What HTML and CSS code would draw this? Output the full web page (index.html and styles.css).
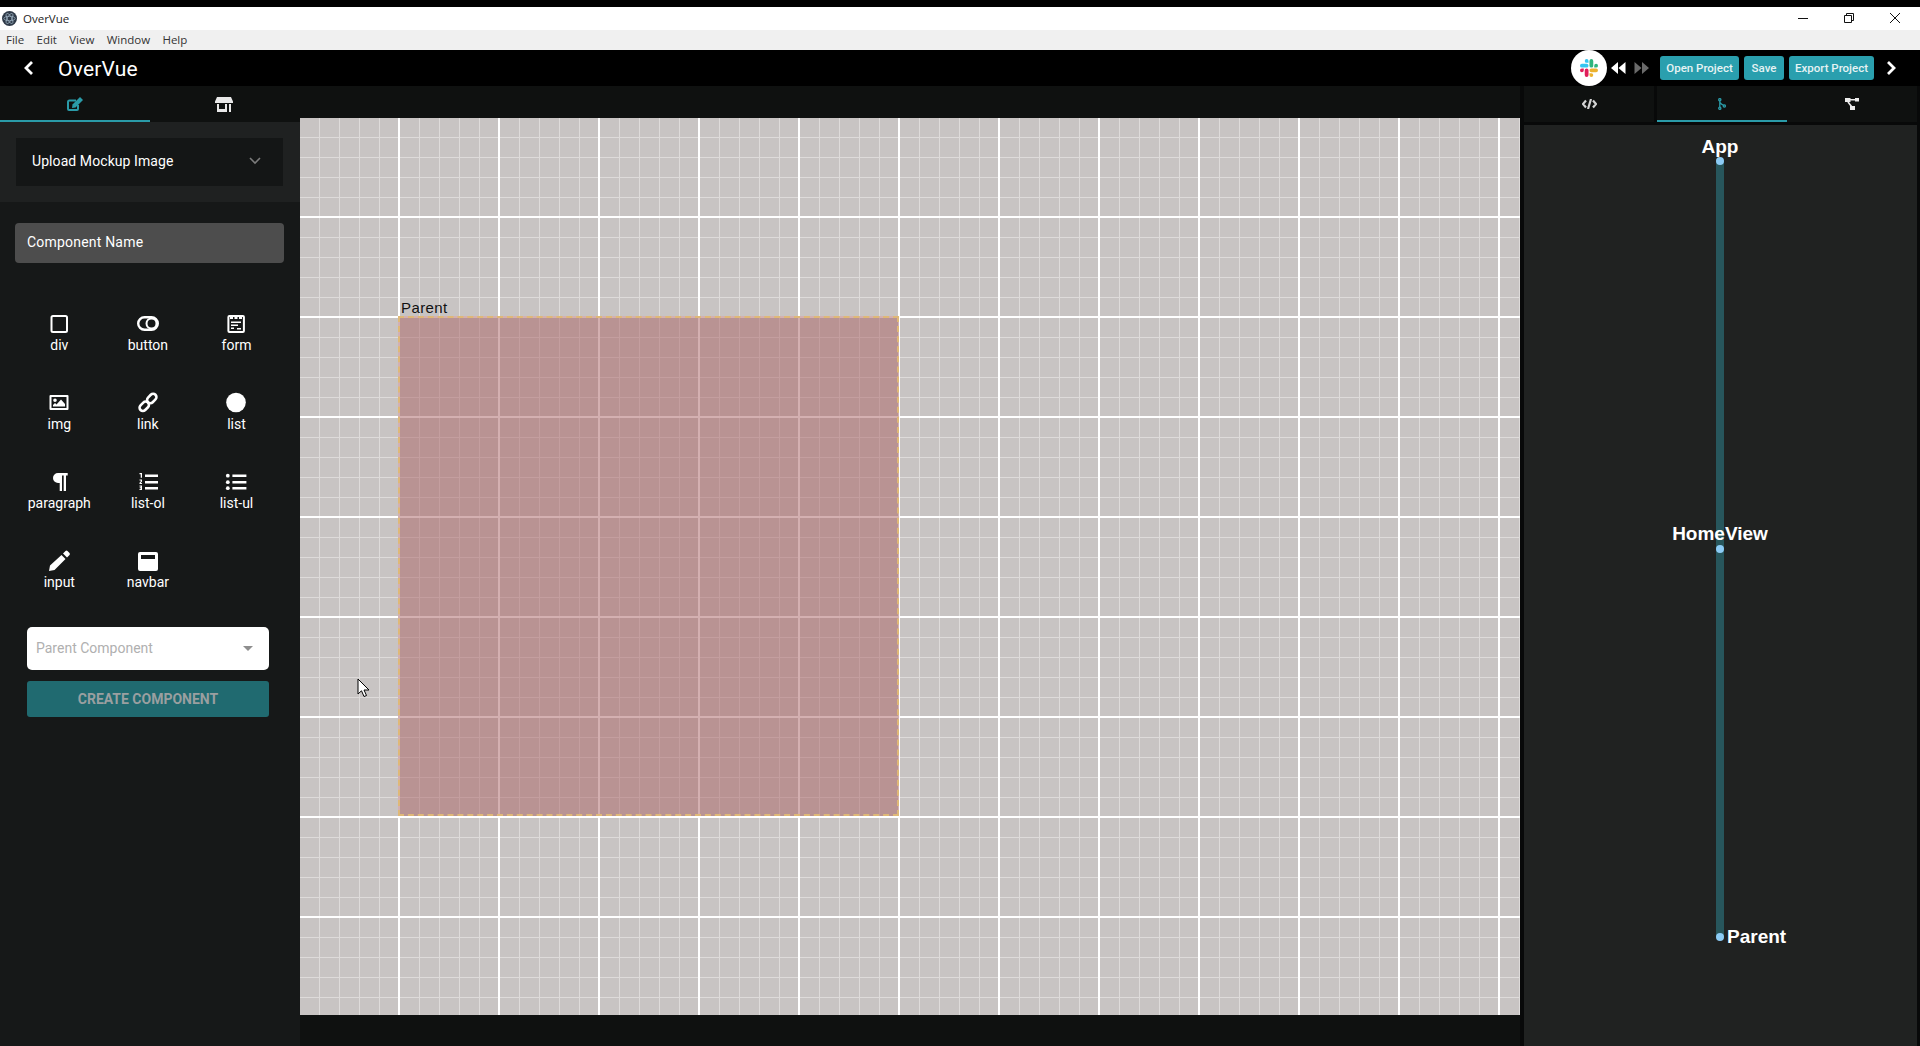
FILE: index.html
```html
<!DOCTYPE html>
<html>
<head>
  <title>OverVue</title>
  <link rel="stylesheet" href="styles.css">
</head>
<body>
  <div class="top-strip"></div>

  <div class="titlebar">
    <svg class="app-icon" viewBox="0 0 16 16">
      <circle cx="8" cy="8" r="8" fill="#2f3a48"/>
      <g fill="none" stroke="#9fb4c4" stroke-width="0.8">
        <ellipse cx="8" cy="8" rx="6" ry="2.4"/>
        <ellipse cx="8" cy="8" rx="6" ry="2.4" transform="rotate(60 8 8)"/>
        <ellipse cx="8" cy="8" rx="6" ry="2.4" transform="rotate(120 8 8)"/>
      </g>
    </svg>
    <span class="app-name">OverVue</span>
    <div class="win-controls">
      <svg viewBox="0 0 46 20"><path d="M18 10.5h10" stroke="#111" fill="none"/></svg>
      <svg viewBox="0 0 46 20"><path d="M18.5 7.5h7v7h-7zM20.5 7.5v-2h7v7h-2" stroke="#111" fill="none"/></svg>
      <svg viewBox="0 0 46 20"><path d="M18 5l10 10M28 5l-10 10" stroke="#111" fill="none"/></svg>
    </div>
  </div>

  <div class="menubar">
    <span>File</span><span>Edit</span><span>View</span><span>Window</span><span>Help</span>
  </div>

  <header class="app-header">
    <svg class="chevron chevron-back" viewBox="0 0 12 16"><path d="M9 2L3 8l6 6" /></svg>
    <span class="app-title">OverVue</span>
    <div class="header-actions">
      <div class="slack-badge">
        <svg viewBox="0 0 24 24">
          <path fill="#e01e5a" d="M5.042 15.165a2.528 2.528 0 0 1-2.52 2.523A2.528 2.528 0 0 1 0 15.165a2.527 2.527 0 0 1 2.522-2.52h2.52v2.52zM6.313 15.165a2.527 2.527 0 0 1 2.521-2.52 2.527 2.527 0 0 1 2.521 2.52v6.313A2.528 2.528 0 0 1 8.834 24a2.528 2.528 0 0 1-2.521-2.522v-6.313z"/>
          <path fill="#36c5f0" d="M8.834 5.042a2.528 2.528 0 0 1-2.521-2.52A2.528 2.528 0 0 1 8.834 0a2.528 2.528 0 0 1 2.521 2.522v2.52H8.834zM8.834 6.313a2.528 2.528 0 0 1 2.521 2.521 2.528 2.528 0 0 1-2.521 2.521H2.522A2.528 2.528 0 0 1 0 8.834a2.528 2.528 0 0 1 2.522-2.521h6.312z"/>
          <path fill="#2eb67d" d="M18.956 8.834a2.528 2.528 0 0 1 2.522-2.521A2.528 2.528 0 0 1 24 8.834a2.528 2.528 0 0 1-2.522 2.521h-2.522V8.834zM17.688 8.834a2.528 2.528 0 0 1-2.523 2.521 2.527 2.527 0 0 1-2.52-2.521V2.522A2.527 2.527 0 0 1 15.165 0a2.528 2.528 0 0 1 2.523 2.522v6.312z"/>
          <path fill="#ecb22e" d="M15.165 18.956a2.528 2.528 0 0 1 2.523 2.522A2.528 2.528 0 0 1 15.165 24a2.527 2.527 0 0 1-2.52-2.522v-2.522h2.52zM15.165 17.688a2.527 2.527 0 0 1-2.52-2.523 2.526 2.526 0 0 1 2.52-2.52h6.313A2.527 2.527 0 0 1 24 15.165a2.528 2.528 0 0 1-2.522 2.523h-6.313z"/>
        </svg>
      </div>
      <svg class="seek seek-back" viewBox="0 0 16 12"><path fill="#fff" d="M8 0v12L1 6zM15.500 0v12L8.500 6z"/></svg>
      <svg class="seek seek-next" viewBox="0 0 16 12"><path fill="#6a6a6a" d="M.5 0v12l7-6zM8 0v12l7-6z"/></svg>
      <button class="head-btn btn-open">Open Project</button>
      <button class="head-btn btn-save">Save</button>
      <button class="head-btn btn-export">Export Project</button>
      <svg class="chevron chevron-next" viewBox="0 0 12 16"><path d="M3 2l6 6-6 6" /></svg>
    </div>
  </header>

  <div class="workspace">
    <aside class="sidebar">
      <div class="tabs">
        <div class="tab tab-active">
          <svg viewBox="0 0 16 14" class="tab-icon">
            <path fill="none" stroke="#2a9ba8" stroke-width="2" d="M9 3.5H2.5A1.5 1.500 0 0 0 1 5v7a1 1 0 0 0 1 1h8a1 1 0 0 0 1-1V8"/>
            <path fill="#2a9ba8" d="M13 0l3 3-7.500 7.500-3.500.5.5-3.500z"/>
          </svg>
        </div>
        <div class="tab">
          <svg viewBox="0 0 18 15" class="icon-store">
            <path fill="#e8e8e8" d="M2 0h14l2 4.500V6H0V4.500zM2 7h2v5h6V7h2v8H2zM14 7h2v8h-2z"/>
          </svg>
        </div>
      </div>

      <div class="upload-section">
        <div class="upload-panel">
          <span>Upload Mockup Image</span>
          <svg viewBox="0 0 12 8" class="upload-caret"><path d="M1 1l5 5 5-5"/></svg>
        </div>
      </div>

      <div class="name-input">Component Name</div>

      <div class="element-grid">
        <div class="element">
          <svg viewBox="0 0 24 20"><rect x="4.5" y="3" width="15.500" height="16" rx="1.500" fill="none" stroke="#fff" stroke-width="2"/></svg>
          <span>div</span>
        </div>
        <div class="element">
          <svg viewBox="0 0 24 20"><rect x="2.200" y="4.200" width="19.600" height="12.600" rx="6.300" fill="none" stroke="#fff" stroke-width="2.400"/><circle cx="15.500" cy="10.500" r="5" fill="none" stroke="#fff" stroke-width="2"/></svg>
          <span>button</span>
        </div>
        <div class="element">
          <svg viewBox="0 0 24 20"><rect x="4.400" y="3" width="15.500" height="16" rx="1" fill="none" stroke="#fff" stroke-width="2"/><path d="M6 4h3v2H6zM10.500 4h3v2h-3zM15 4h3v2h-3zM7 8.500h10v1.400H7zM7 11.500h7v1.400H7zM7 14.500h3v1.400H7zM13 15h4v1.400h-4z" fill="#fff"/></svg>
          <span>form</span>
        </div>
        <div class="element">
          <svg viewBox="0 0 24 20"><path fill="#fff" fill-rule="evenodd" d="M3.500 3h17a1 1 0 0 1 1 1v13a1 1 0 0 1-1 1h-17a1 1 0 0 1-1-1V4a1 1 0 0 1 1-1zM4.500 5v11h15V5zM6 14.500V13l2-2 1.500 1.500 4.500-5 4 4.500v2.500zM8 6.500a1.800 1.800 0 1 1 0 3.600 1.800 1.800 0 0 1 0-3.600z"/></svg>
          <span>img</span>
        </div>
        <div class="element">
          <svg viewBox="0 0 24 20"><g fill="none" stroke="#fff" stroke-width="2.600"><rect x="10.500" y="3.200" width="10.500" height="6.600" rx="3.300" transform="rotate(-45 15.750 6.500)"/><rect x="3" y="11" width="10.500" height="6.600" rx="3.300" transform="rotate(-45 8.250 14.300)"/></g></svg>
          <span>link</span>
        </div>
        <div class="element">
          <svg viewBox="0 0 24 20"><circle cx="12" cy="10.500" r="9.800" fill="#fff"/></svg>
          <span>list</span>
        </div>
        <div class="element">
          <svg viewBox="0 0 24 20"><path fill="#fff" d="M11 2h9.700v2.400h-1.700V20h-2.300V4.400H15V20h-2.300v-8H11A5 5 0 0 1 11 2z"/></svg>
          <span>paragraph</span>
        </div>
        <div class="element">
          <svg viewBox="0 0 24 20"><path fill="#fff" d="M9 3.500h13V6H9zM9 10h13v2.500H9zM9 16h13v2.500H9zM3.500 2H6v4.800H4.700V3.200H3.500zM3.500 8.500H6v2L4.700 12H6v1H3.500v-1.200l1.200-1.400V9.500H3.500zM3.500 14.500H6V19H3.500v-1h1.200v-.8h-1v-.9h1v-.8H3.500z"/></svg>
          <span>list-ol</span>
        </div>
        <div class="element">
          <svg viewBox="0 0 24 20"><path fill="#fff" d="M8.400 3.500h14V6h-14zM8.400 10h14v2.500h-14zM8.400 16h14v2.500h-14z"/><circle cx="3.800" cy="4.700" r="1.900" fill="#fff"/><circle cx="3.800" cy="11.200" r="1.900" fill="#fff"/><circle cx="3.800" cy="17.200" r="1.900" fill="#fff"/></svg>
          <span>list-ul</span>
        </div>
        <div class="element">
          <svg viewBox="0 0 24 20"><path fill="#fff" d="M14.500 5l4 4L7.500 20 2 21l1-5.500zM16 3.500l2.500-2.500a1.500 1.500 0 0 1 2 0L22.500 3a1.500 1.500 0 0 1 0 2L20 7.500z"/></svg>
          <span>input</span>
        </div>
        <div class="element">
          <svg viewBox="0 0 24 20"><path fill="#fff" fill-rule="evenodd" d="M4 2h16a2 2 0 0 1 2 2v15a2 2 0 0 1-2 2H4a2 2 0 0 1-2-2V4a2 2 0 0 1 2-2zM5 5v4h14V5z"/></svg>
          <span>navbar</span>
        </div>
      </div>

      <div class="parent-select">
        <span>Parent Component</span>
        <i class="select-caret"></i>
      </div>
      <button class="create-btn">CREATE COMPONENT</button>
    </aside>

    <main class="center">
      <div class="canvas">
        <div class="comp-label">Parent</div>
        <div class="comp-box"></div>
        <svg class="cursor" viewBox="0 0 13 20"><path d="M1 1v15l3.500-3.200 2.500 5.700 2.500-1-2.500-5.500H12z" fill="#fff" stroke="#000"/></svg>
      </div>
    </main>

    <aside class="rightbar">
      <div class="tabs right-tabs">
        <div class="tab">
          <svg viewBox="0 0 15 10" class="icon-code"><path fill="none" stroke="#d4d4d4" stroke-width="2.200" d="M4 1.500L1 5l3 3.500M11 1.500L14 5l-3 3.500M9 0L6 10"/></svg>
        </div>
        <div class="tab tab-active">
          <svg viewBox="0 0 8 12" class="icon-tree"><g fill="none" stroke="#2a9ba8" stroke-width="1.300"><circle cx="1.800" cy="1.700" r="1.100"/><circle cx="1.800" cy="10.300" r="1.100"/><circle cx="6.300" cy="8" r="1.100"/><path d="M1.800 3v6M2.200 4.500C3 6.500 4.500 6.800 5.600 7.200"/></g></svg>
        </div>
        <div class="tab">
          <svg viewBox="0 0 14 12" class="icon-diagram"><path fill="#ececec" d="M0 0h5.500v4H0zM10 0h4v3.500h-4zM5.500 1h4.500v1.500H5.500zM5 8h5v4H5z"/><path stroke="#ececec" stroke-width="1.600" d="M3 4l3.500 4.500"/></svg>
        </div>
      </div>
      <div class="tree-panel">
        <svg class="tree" viewBox="0 0 393 921">
          <path class="tree-link" d="M196 36V812"/>
          <circle class="tree-dot" cx="196" cy="36" r="4"/>
          <circle class="tree-dot" cx="196" cy="424" r="4"/>
          <circle class="tree-dot" cx="196" cy="812" r="4"/>
          <text class="tree-text" x="196" y="28" text-anchor="middle">App</text>
          <text class="tree-text" x="196" y="415" text-anchor="middle">HomeView</text>
          <text class="tree-text" x="203" y="818">Parent</text>
        </svg>
      </div>
    </aside>
  </div>
</body>
</html>
```

FILE: styles.css
```css
* {
  box-sizing: border-box;
}

html, body {
  margin: 0;
  height: 100%;
  overflow: hidden;
}

body {
  display: flex;
  flex-direction: column;
  background-color: #000;
  font-family: Roboto, "Liberation Sans", sans-serif;
  color: #fff;
}

/* Window chrome */
.top-strip {
  height: 7px;
  background-color: #000;
}

.titlebar {
  display: flex;
  align-items: center;
  height: 23px;
  padding-left: 2px;
  background-color: #fff;
  color: #222;
  font-family: "Open Sans", sans-serif;
  font-size: 11.5px;
}

.app-icon {
  width: 15px;
  height: 15px;
  margin-right: 6px;
}

.win-controls {
  display: flex;
  margin-left: auto;
  margin-right: 2px;
}

.win-controls svg {
  width: 46px;
  height: 20px;
  margin-top: -2px;
}

.menubar {
  display: flex;
  align-items: center;
  gap: 12.3px;
  height: 20px;
  padding: 0 0 2px 6px;
  background-color: #f0f0f0;
  color: #333;
  font-family: "Open Sans", sans-serif;
  font-size: 11.5px;
}

.app-header {
  display: flex;
  align-items: center;
  height: 36px;
  padding-left: 23px;
  background-color: #000;
}

.chevron {
  width: 12px;
  height: 16px;
  fill: none;
  stroke: #fff;
  stroke-width: 2.8;
}

.app-title {
  margin-left: 23px;
  padding-top: 1px;
  font-size: 21px;
  letter-spacing: 0.2px;
}

.header-actions {
  display: flex;
  align-items: center;
  margin-left: auto;
  padding-right: 23px;
}

.slack-badge {
  display: flex;
  align-items: center;
  justify-content: center;
  width: 36px;
  height: 36px;
  border-radius: 50%;
  background-color: #fff;
}

.slack-badge svg {
  width: 18px;
  height: 18px;
}

.seek {
  width: 16px;
  height: 12px;
}

.seek-back {
  margin-left: 3px;
}

.seek-next {
  margin-left: 8px;
}

.head-btn {
  height: 24px;
  padding: 0;
  border: none;
  border-radius: 3px;
  background-color: #2a9fae;
  color: #e6f3f4;
  font-family: Roboto, sans-serif;
  font-size: 11.5px;
  font-weight: 500;
}

.btn-open {
  width: 79px;
  margin-left: 10px;
}

.btn-save {
  width: 40px;
  margin-left: 5px;
}

.btn-export {
  width: 85px;
  margin-left: 5px;
}

.chevron-next {
  margin-left: 11px;
}

/* Main area */
.workspace {
  display: flex;
  flex: 1;
  min-height: 0;
}

.sidebar {
  display: flex;
  flex-direction: column;
  width: 300px;
  background-color: #161818;
}

.tabs {
  display: flex;
  height: 36px;
  background-color: #0f1110;
}

.tab {
  display: flex;
  flex: 1;
  align-items: center;
  justify-content: center;
  background-color: #0f1110;
}

.tab-active {
  border-bottom: 2px solid #2a9ba8;
  padding-top: 2px;
}

.tab-icon {
  width: 16px;
  height: 14px;
}

.icon-store {
  width: 18px;
  height: 15px;
  margin-right: 2px;
}

.upload-section {
  height: 80px;
  padding: 16px 17px 16px 16px;
  background-color: #1f2121;
}

.upload-panel {
  display: flex;
  align-items: center;
  justify-content: space-between;
  height: 48px;
  padding: 0 22px 2px 16px;
  background-color: #141616;
  font-size: 14px;
  letter-spacing: 0.08px;
}

.upload-caret {
  width: 12px;
  height: 8px;
  fill: none;
  stroke: #7c7c7c;
  stroke-width: 1.6;
}

.name-input {
  display: flex;
  align-items: center;
  width: 269px;
  height: 40px;
  margin: 21px 0 0 15px;
  padding: 0 0 2px 12px;
  border-radius: 4px;
  background-color: #4d4d4d;
  font-size: 14px;
  letter-spacing: 0.2px;
}

.element-grid {
  display: grid;
  grid-template-columns: repeat(3, 88.6px);
  row-gap: 37px;
  margin: 50px 0 0 15px;
}

.element {
  display: flex;
  flex-direction: column;
  align-items: center;
  height: 42px;
  font-size: 14px;
  line-height: 20px;
  color: #fff;
}

.element svg {
  flex: none;
  width: 24px;
  height: 20px;
  margin-bottom: 2px;
  overflow: visible;
}

.parent-select {
  display: flex;
  align-items: center;
  justify-content: space-between;
  width: 242px;
  height: 43px;
  margin: 35px 0 0 27px;
  padding: 0 16px 1px 9px;
  border-radius: 5px;
  background-color: #fff;
  color: #b0b0b0;
  font-size: 14px;
}

.select-caret {
  width: 0;
  height: 0;
  border-left: 5px solid transparent;
  border-right: 5px solid transparent;
  border-top: 5px solid #8e8e8e;
}

.create-btn {
  width: 242px;
  height: 36px;
  margin: 11px 0 0 27px;
  padding-bottom: 2px;
  border: none;
  border-radius: 3px;
  background-color: #206a70;
  color: #9a9fa0;
  font-family: Roboto, sans-serif;
  font-size: 14px;
  font-weight: 700;
}

/* Canvas */
.center {
  width: 1220px;
  padding: 32px 0 31px;
  background-color: #0f1110;
}

.canvas {
  position: relative;
  height: 100%;
  overflow: hidden;
  background-color: #c8c4c3;
  background-image:
    linear-gradient(to bottom, transparent 98px, #fff 98px),
    linear-gradient(to right, transparent 98px, #fff 98px),
    linear-gradient(to bottom, transparent 19px, #dedbda 19px),
    linear-gradient(to right, transparent 19px, #dedbda 19px);
  background-size: 100px 100px, 100px 100px, 20px 20px, 20px 20px;
}

.comp-label {
  position: absolute;
  left: 101px;
  top: 181px;
  color: #111;
  font-family: "Liberation Sans", sans-serif;
  font-size: 15px;
  letter-spacing: 0.4px;
}

.comp-box {
  position: absolute;
  left: 98px;
  top: 198px;
  width: 501px;
  height: 500px;
  border: 2px dashed #dfb877;
  background-color: rgba(170, 98, 99, 0.5);
}

.cursor {
  position: absolute;
  left: 57px;
  top: 560px;
  width: 13px;
  height: 20px;
}

/* Right panel */
.rightbar {
  display: flex;
  flex-direction: column;
  flex: 1;
  padding: 0 3px 0 4px;
  background-color: #080909;
}

.right-tabs {
  background-color: transparent;
}

.right-tabs .tab {
  flex: none;
  width: 130px;
}

.right-tabs .tab-active {
  margin-left: 3px;
}

.icon-code {
  width: 15px;
  height: 10px;
}

.icon-tree {
  width: 8px;
  height: 12px;
}

.icon-diagram {
  width: 14px;
  height: 12px;
}

.tree-panel {
  flex: 1;
  margin-top: 3px;
  background-color: #202221;
}

.tree {
  display: block;
  width: 393px;
  height: 921px;
}

.tree-link {
  stroke: #27565c;
  stroke-width: 8;
  fill: none;
}

.tree-dot {
  fill: #8ccbf5;
}

.tree-text {
  fill: #fff;
  font-family: "Liberation Sans", sans-serif;
  font-size: 19px;
  font-weight: 700;
}
```
